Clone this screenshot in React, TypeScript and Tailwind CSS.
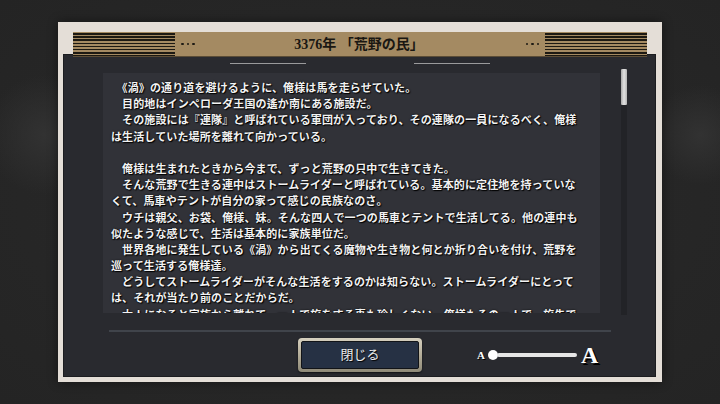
import React from "react";

const lines = [
  "　《渦》の通り道を避けるように、俺様は馬を走らせていた。",
  "　目的地はインペローダ王国の遙か南にある施設だ。",
  "　その施設には『連隊』と呼ばれている軍団が入っており、その連隊の一員になるべく、俺様",
  "は生活していた場所を離れて向かっている。",
  "",
  "　俺様は生まれたときから今まで、ずっと荒野の只中で生きてきた。",
  "　そんな荒野で生きる連中はストームライダーと呼ばれている。基本的に定住地を持っていな",
  "くて、馬車やテントが自分の家って感じの民族なのさ。",
  "　ウチは親父、お袋、俺様、妹。そんな四人で一つの馬車とテントで生活してる。他の連中も",
  "似たような感じで、生活は基本的に家族単位だ。",
  "　世界各地に発生している《渦》から出てくる魔物や生き物と何とか折り合いを付け、荒野を",
  "巡って生活する俺様達。",
  "　どうしてストームライダーがそんな生活をするのかは知らない。ストームライダーにとって",
  "は、それが当たり前のことだからだ。",
  "　大人になると家族から離れて、一人で旅をする事も珍しくない。俺様もその一人で、旅先で",
];

function Stripes() {
  return (
    <div className="w-[102px] h-full bg-[repeating-linear-gradient(to_bottom,transparent_0px,transparent_1.2px,#1c1913_1.2px,#1c1913_2.6px,transparent_2.6px,transparent_3.15px)]" />
  );
}

function Dots() {
  return (
    <div className="flex gap-[3px] items-center">
      <div className="w-[2.5px] h-[2.5px] rounded-full bg-[#1c1913]" />
      <div className="w-[2.5px] h-[2.5px] rounded-full bg-[#1c1913]" />
      <div className="w-[2.5px] h-[2.5px] rounded-full bg-[#1c1913]" />
    </div>
  );
}

export default function App() {
  return (
    <div className="w-[720px] h-[404px] overflow-hidden bg-[#272727] bg-[radial-gradient(circle_at_45px_135px,#323232_0px,transparent_60px),radial-gradient(circle_at_700px_135px,#323232_0px,transparent_50px),radial-gradient(ellipse_at_50%_50%,#2a2a2a,#242424)] pt-[22px] pl-[58px]">
      <div className="w-[604px] h-[360px] bg-[#e4ded7] flex flex-col pt-[10px] shadow-[0_0_10px_rgba(0,0,0,0.45)]">
        {/* header */}
        <div className="relative z-10 mx-[15px] h-[24px] bg-[#a48a62] flex items-center shadow-[0_1px_0_#5a4c36]">
          <Stripes />
          <div className="ml-[6px]">
            <Dots />
          </div>
          <div className="flex-1 text-center text-[14px] font-bold text-[#1a1712] pr-[2px] [font-family:'Liberation_Serif','Noto_Sans_CJK_JP',serif]">
            3376年 「荒野の民」
          </div>
          <div className="mr-[6px]">
            <Dots />
          </div>
          <Stripes />
        </div>
        {/* dark panel */}
        <div className="ml-[5px] mr-[6px] mb-[5px] -mt-[2px] flex-1 bg-[#292a2f] flex flex-col border border-[#1c1d20]">
          <div className="flex justify-center gap-[108px] pt-[8px] pl-[1px]">
            <div className="w-[76px] h-[1px] bg-[#9a9a9c]" />
            <div className="w-[76px] h-[1px] bg-[#9a9a9c]" />
          </div>
          <div className="flex items-start mt-[9px] h-[240px]">
            <div className="ml-[39px] w-[497px] h-[240px] bg-[#313238] overflow-hidden pt-[6px] pl-[8px] text-[11px] leading-[16.2px] font-bold text-[#f2f2f2] tracking-[0.12px] [text-shadow:1px_1px_1px_#000,0_0_2px_#000] [font-family:'Noto_Sans_CJK_JP',sans-serif]">
              {lines.map((l, i) => (
                <div key={i} className="whitespace-pre h-[16.2px]">
                  {l}
                </div>
              ))}
            </div>
            <div className="ml-[21px] -mt-[4px] w-[6px] h-[246px] bg-[#222327] flex flex-col">
              <div className="h-[36px] w-full bg-[linear-gradient(to_right,#a9a9a9,#e2e2e2,#b5b5b5)] rounded-[1px]" />
            </div>
          </div>
          <div className="ml-[45px] mt-[17px] w-[502px] h-[2px] bg-[#40444b]" />
          <div className="flex items-center mt-[6px]">
            <div className="ml-[234px] w-[124px] h-[34px] rounded-[4px] p-[3px] bg-[linear-gradient(to_bottom,#d6d0bf,#b4ad99,#8f8a78)] shadow-[0_1px_2px_rgba(0,0,0,0.6)]">
              <div className="w-full h-full rounded-[2px] bg-[#263144] border border-[#121418] flex items-center justify-center text-[13px] text-[#ececec] [text-shadow:1px_1px_1px_#000] [font-family:'Liberation_Serif','Noto_Sans_CJK_JP',serif]">
                閉じる
              </div>
            </div>
            <div className="ml-[55px] flex items-center">
              <span className="text-[11px] font-bold text-white leading-none [text-shadow:1px_1px_0_#000] [font-family:'Liberation_Serif',serif]">A</span>
              <div className="ml-[3px] flex items-center">
                <div className="w-[10px] h-[10px] rounded-full bg-white" />
                <div className="-ml-[1px] w-[80px] h-[4px] rounded-full bg-[#e6e6e6]" />
              </div>
              <span className="ml-[4px] text-[24px] font-bold text-white leading-none [text-shadow:2px_2px_0_#000] [font-family:'Liberation_Serif',serif]">A</span>
            </div>
          </div>
        </div>
      </div>
    </div>
  );
}
